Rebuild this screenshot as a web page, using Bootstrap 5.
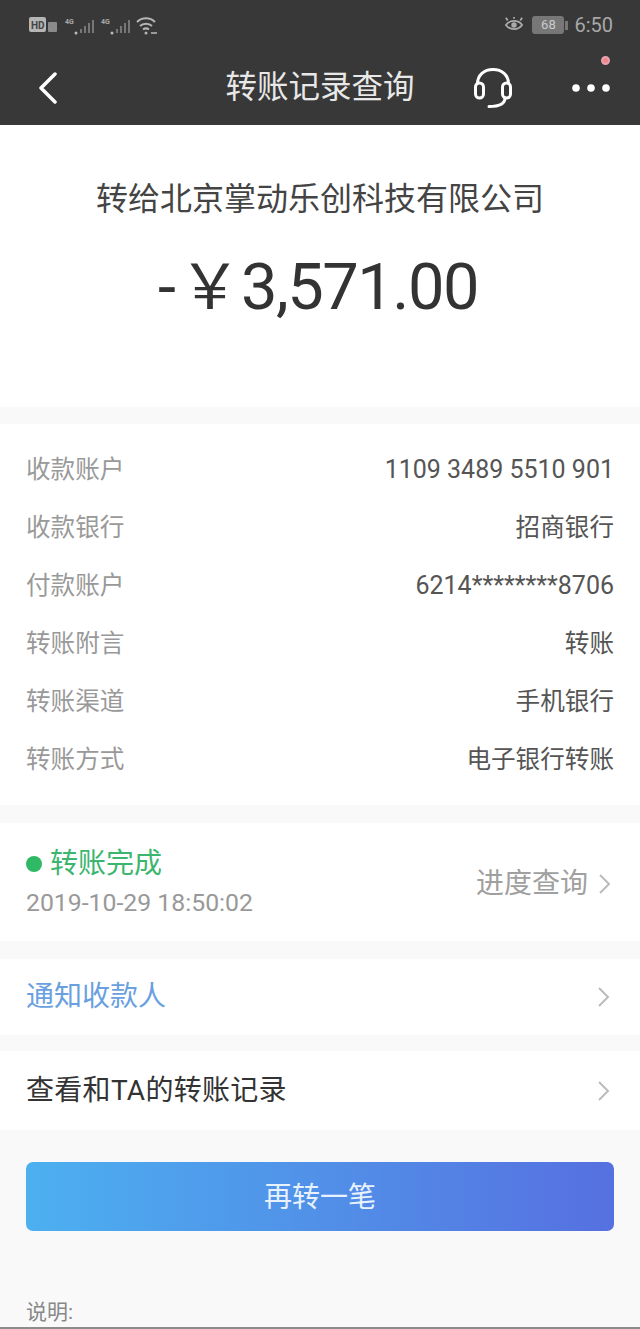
<!DOCTYPE html>
<html lang="zh">
<head>
<meta charset="utf-8">
<title>转账记录查询</title>
<link href="https://cdn.jsdelivr.net/npm/bootstrap@5.3.0/dist/css/bootstrap.min.css" rel="stylesheet">
<style>
html,body{height:1329px;overflow:hidden}
body{background:#f9f9f9;font-family:"Roboto","Noto Sans CJK SC",sans-serif;color:#333;width:640px}
.top-head{background:#383838;height:125px;color:#fff}
.stat-bar{height:50px;padding:0 27px 0 29px;color:#a8a8a8;font-size:20px}
.title-bar{height:75px;padding:0 30px 0 38px;position:relative}
.title-txt{position:absolute;left:0;right:0;top:18px;text-align:center;font-size:31.500px;line-height:40px;color:#e8e8e8}
.hd-red{position:absolute;right:30px;top:6px;width:9px;height:9px;border-radius:50%;background:#e88;border:2px solid #e9a0b0}
.batt{font-size:13px;line-height:18px;width:32px;height:18px;background:#777;color:#ccc;border-radius:3px;text-align:center}
.batt-nub{width:3px;height:9px;background:#777;margin-left:-3px;margin-right:2px}
.hero{background:#fff;height:282px;padding-top:52px;text-align:center}
.hero-name{font-size:32px;line-height:44px;color:#444}
.hero-amt{line-height:76px;margin-top:28px;color:#333;padding-right:4px}
.amt-dash{font-size:65px;margin-right:3px}
.amt-yen{font-size:62px;margin-right:0}
.amt-num{font-size:65px;letter-spacing:-1.500px}
.sec{background:#fff}
.gap1{margin-top:18px}
.info{height:381px;padding-top:17px;margin-top:17px}
.info-row{height:58px;padding:0 26px;font-size:24.600px}
.k{color:#999}.v{color:#555}
.num-v{font-size:25px}
.status{height:118px;padding:0 26px}
.ok-dot{width:16px;height:16px;background:#2fb866;border-radius:50%}
.ok-txt{color:#3cb56f;font-size:28px;line-height:38px}
.ts{color:#999;font-size:24.800px;line-height:32px;margin-top:4px}
.prog{color:#a0a0a0;font-size:28px;gap:10px;margin-right:-1px;padding-top:3px}
.line-row{padding:0 26px;font-size:28px}
.r-a{height:76px}.r-b{height:79px;margin-top:16px}
.r-b span{letter-spacing:.3px}
.blue-t{color:#6a9fe0}
.chev{margin-right:3px}
.btn-again{display:block;width:100%;height:69px;border:0;border-radius:7px;background:linear-gradient(90deg,#4cb0f0,#5670e0);color:#e8f2ff;font-size:28px;padding-top:8px}
.btn-wrap{padding:32px 26px 0}
.note{height:96px;padding:67px 26px 0;color:#888;font-size:21px;line-height:28px}
.end-line{height:2px;background:#8c8c8c}
</style>
</head>
<body>
<div class="top-head">
  <div class="stat-bar d-flex align-items-center justify-content-between">
    <svg width="130" height="24" viewBox="0 0 130 24" fill="none" aria-hidden="true">
      <rect x="0" y="4" width="17" height="15" rx="2" fill="#b5b5b5"/>
      <text x="2" y="15.500" font-size="10" font-weight="700" font-family="Roboto" fill="#444">HD</text>
      <rect x="19" y="9" width="9" height="10" rx="1" fill="#8a8a8a"/>
      <text x="36" y="11" font-size="7" font-weight="700" font-family="Roboto" fill="#aaa">4G</text>
      <circle cx="47" cy="20" r="1.500" fill="#bbb"/>
      <path d="M52 20v-4M56 20v-7M60 20v-10M64 20v-13" stroke="#777" stroke-width="2"/>
      <text x="72" y="11" font-size="7" font-weight="700" font-family="Roboto" fill="#aaa">4G</text>
      <circle cx="83" cy="20" r="1.500" fill="#bbb"/>
      <path d="M88 20v-4M92 20v-7M96 20v-10M100 20v-13" stroke="#777" stroke-width="2"/>
      <path d="M108 9c5-5 13-5 18 0M111 13c3-3 9-3 12 0M114 16.500c2-1.500 4-1.500 6 0" stroke="#b5b5b5" stroke-width="2"/>
      <circle cx="117" cy="20" r="1.500" fill="#b5b5b5"/>
      <path d="M122 20h6" stroke="#999" stroke-width="2"/>
    </svg>
    <div class="d-flex align-items-center gap-1">
      <svg width="20" height="18" viewBox="0 0 22 20" fill="none" aria-hidden="true" class="me-1">
        <path d="M2 10c4-6 14-6 18 0-4 6-14 6-18 0z" stroke="#aaa" stroke-width="2"/>
        <circle cx="11" cy="10" r="3" fill="#aaa"/>
        <path d="M4 5l-2-3M11 3V1M18 5l2-3" stroke="#aaa" stroke-width="2"/>
      </svg>
      <div class="batt">68</div>
      <div class="batt-nub"></div>
      <span>6:50</span>
    </div>
  </div>
  <div class="title-bar d-flex align-items-center justify-content-between">
    <svg width="20" height="32" viewBox="0 0 20 32" fill="none" aria-hidden="true">
      <path d="M17 2L3 16l14 14" stroke="#fff" stroke-width="3.500" stroke-linecap="round" stroke-linejoin="round"/>
    </svg>
    <div class="title-txt">转账记录查询</div>
    <div class="d-flex align-items-center" style="gap:60px">
      <svg width="38" height="40" viewBox="0 0 38 40" fill="none" aria-hidden="true">
        <path d="M3.500 16C3.500 7 10 1.500 19 1.500S34.500 7 34.500 16" stroke="#fff" stroke-width="3"/>
        <rect x="1.500" y="15" width="8" height="15" rx="4" stroke="#fff" stroke-width="3"/>
        <rect x="28.500" y="15" width="8" height="15" rx="4" stroke="#fff" stroke-width="3"/>
        <path d="M31 30c0 6-5 8.500-16 8.500" stroke="#fff" stroke-width="3" stroke-linecap="round"/>
      </svg>
      <svg width="38" height="8" viewBox="0 0 38 8" aria-hidden="true">
        <circle cx="4" cy="4" r="3.800" fill="#fff"/><circle cx="19" cy="4" r="3.800" fill="#fff"/><circle cx="34" cy="4" r="3.800" fill="#fff"/>
      </svg>
    </div>
    <span class="hd-red"></span>
  </div>
</div>
<div class="hero">
  <div class="hero-name">转给北京掌动乐创科技有限公司</div>
  <div class="hero-amt d-flex justify-content-center align-items-baseline"><span class="amt-dash">-</span><span class="amt-yen">￥</span><span class="amt-num">3,571.00</span></div>
</div>
<div class="sec info">
  <div class="info-row d-flex align-items-center justify-content-between"><span class="k">收款账户</span><span class="v num-v">1109 3489 5510 901</span></div>
  <div class="info-row d-flex align-items-center justify-content-between"><span class="k">收款银行</span><span class="v">招商银行</span></div>
  <div class="info-row d-flex align-items-center justify-content-between"><span class="k">付款账户</span><span class="v num-v">6214********8706</span></div>
  <div class="info-row d-flex align-items-center justify-content-between"><span class="k">转账附言</span><span class="v">转账</span></div>
  <div class="info-row d-flex align-items-center justify-content-between"><span class="k">转账渠道</span><span class="v">手机银行</span></div>
  <div class="info-row d-flex align-items-center justify-content-between"><span class="k">转账方式</span><span class="v">电子银行转账</span></div>
</div>
<div class="sec status gap1 d-flex align-items-center justify-content-between">
  <div>
    <div class="d-flex align-items-center gap-2"><span class="ok-dot"></span><span class="ok-txt">转账完成</span></div>
    <div class="ts">2019-10-29 18:50:02</div>
  </div>
  <div class="prog d-flex align-items-center">进度查询
    <svg class="chev" width="14" height="22" viewBox="0 0 14 22" fill="none" aria-hidden="true"><path d="M2 2l9 9-9 9" stroke="#bbb" stroke-width="2"/></svg>
  </div>
</div>
<div class="sec line-row r-a gap1 d-flex align-items-center justify-content-between">
  <span class="blue-t">通知收款人</span>
  <svg class="chev" width="14" height="22" viewBox="0 0 14 22" fill="none" aria-hidden="true"><path d="M2 2l9 9-9 9" stroke="#bbb" stroke-width="2"/></svg>
</div>
<div class="sec line-row r-b d-flex align-items-center justify-content-between">
  <span>查看和TA的转账记录</span>
  <svg class="chev" width="14" height="22" viewBox="0 0 14 22" fill="none" aria-hidden="true"><path d="M2 2l9 9-9 9" stroke="#bbb" stroke-width="2"/></svg>
</div>
<div class="btn-wrap"><button type="button" class="btn btn-again">再转一笔</button></div>
<div class="note">说明:</div>
<div class="end-line"></div>
</body>
</html>
